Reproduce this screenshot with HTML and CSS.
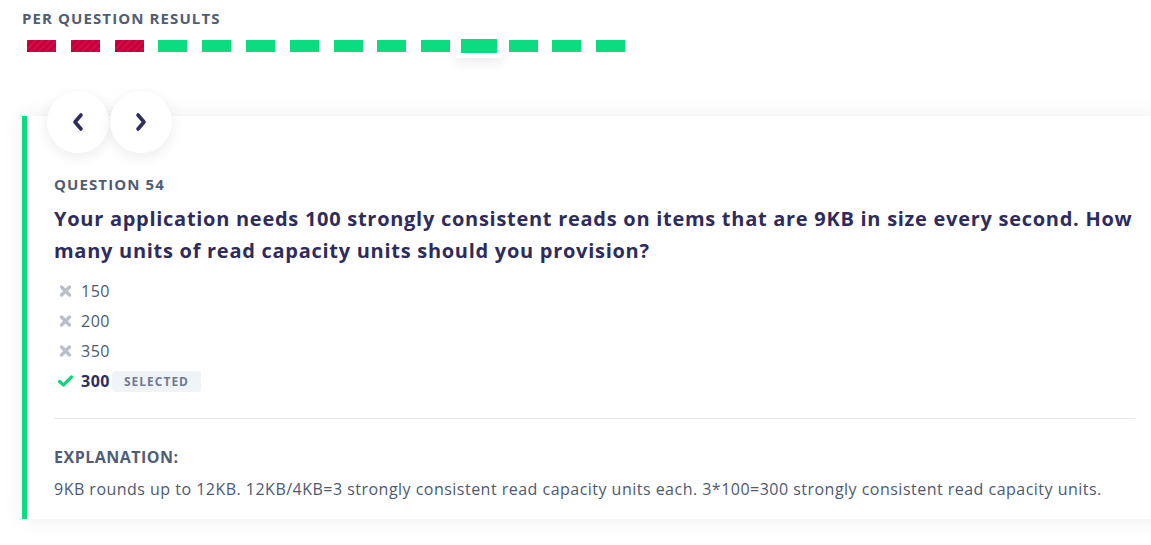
FILE: index.html
```html
<!DOCTYPE html>
<html lang="en">
<head>
<meta charset="utf-8">
<title>Per question results</title>
<link rel="stylesheet" href="styles.css">
</head>
<body>
<section class="results">
  <h2 class="results-title">PER QUESTION RESULTS</h2>
  <div class="bars">
    <span class="bar wrong"></span>
    <span class="bar wrong"></span>
    <span class="bar wrong"></span>
    <span class="bar right"></span>
    <span class="bar right"></span>
    <span class="bar right"></span>
    <span class="bar right"></span>
    <span class="bar right"></span>
    <span class="bar right"></span>
    <span class="bar right"></span>
    <span class="bar right current"></span>
    <span class="bar right"></span>
    <span class="bar right"></span>
    <span class="bar right"></span>
  </div>
</section>

<section class="card-area">
  <div class="nav">
    <button class="nav-btn" aria-label="Previous">
      <svg width="16" height="22" viewBox="0 0 16 22"><path d="M11 4 L5 11 L11 18" fill="none" stroke="#2e2c5c" stroke-width="3.6" stroke-linecap="round" stroke-linejoin="round"/></svg>
    </button>
    <button class="nav-btn" aria-label="Next">
      <svg width="16" height="22" viewBox="0 0 16 22"><path d="M5 4 L11 11 L5 18" fill="none" stroke="#2e2c5c" stroke-width="3.6" stroke-linecap="round" stroke-linejoin="round"/></svg>
    </button>
  </div>
  <article class="card">
    <div class="q-label">QUESTION 54</div>
    <h1 class="q-text">Your application needs 100 strongly consistent reads on items that are 9KB in size every second. How many units of read capacity units should you provision?</h1>
    <ul class="options">
      <li class="option">
        <svg class="icon" width="14" height="14" viewBox="0 0 14 14"><path d="M3 3 L11 11 M11 3 L3 11" stroke="#b9bfc9" stroke-width="3.4" stroke-linecap="round"/></svg>
        <span>150</span>
      </li>
      <li class="option">
        <svg class="icon" width="14" height="14" viewBox="0 0 14 14"><path d="M3 3 L11 11 M11 3 L3 11" stroke="#b9bfc9" stroke-width="3.4" stroke-linecap="round"/></svg>
        <span>200</span>
      </li>
      <li class="option">
        <svg class="icon" width="14" height="14" viewBox="0 0 14 14"><path d="M3 3 L11 11 M11 3 L3 11" stroke="#b9bfc9" stroke-width="3.4" stroke-linecap="round"/></svg>
        <span>350</span>
      </li>
      <li class="option chosen">
        <svg class="icon" width="17" height="14" viewBox="0 0 17 14"><path d="M2.5 7.5 L6.5 11 L14.5 3" fill="none" stroke="#17d17f" stroke-width="3.2" stroke-linecap="round" stroke-linejoin="round"/></svg>
        <span>300</span>
        <span class="badge">SELECTED</span>
      </li>
    </ul>
    <hr class="divider">
    <div class="exp-label">EXPLANATION:</div>
    <p class="exp-text">9KB rounds up to 12KB. 12KB/4KB=3 strongly consistent read capacity units each. 3*100=300 strongly consistent read capacity units.</p>
  </article>
</section>
</body>
</html>
```

FILE: styles.css
```css
html, body {
  margin: 0;
  padding: 0;
  overflow: hidden;
  background: #ffffff;
}

body {
  font-family: "Open Sans", "Noto Sans", sans-serif;
  color: #4d5a72;
  width: 1151px;
  height: 545px;
}

.results {
  padding: 8px 0 0 22px;
}

.results-title {
  margin: 0;
  font-size: 15px;
  line-height: 21px;
  font-weight: 700;
  letter-spacing: 1.1px;
  color: #505d76;
}

.bars {
  display: flex;
  align-items: center;
  gap: 14.8px;
  margin: 9px 0 0 5px;
  height: 16px;
}

.bar {
  display: block;
  width: 29px;
  height: 12px;
  flex: none;
}

.bar.right {
  background: #0bdc80;
}

.bar.wrong {
  background: repeating-linear-gradient(135deg, #d8064a 0 2.5px, #c00038 2.5px 5px);
}

.bar.current {
  width: 36px;
  height: 14px;
  margin: 0 -3.6px;
  box-shadow: 0 0 0 5px #ffffff, 0 5px 12px 5px rgba(30, 30, 70, 0.08);
}

.card-area {
  position: relative;
  margin-top: 62px;
}

.nav {
  position: absolute;
  left: 47px;
  top: -25px;
  display: flex;
  gap: 1px;
  z-index: 2;
}

.nav-btn {
  width: 62px;
  height: 62px;
  border-radius: 50%;
  border: none;
  background: #ffffff;
  box-shadow: 0 4px 14px rgba(30, 30, 70, 0.08);
  display: flex;
  align-items: center;
  justify-content: center;
  padding: 0;
  cursor: pointer;
}

.card {
  margin: 0 -14px 0 22px;
  background: #ffffff;
  border-left: 5px solid #0bdc80;
  box-shadow: 0 0 22px rgba(30, 30, 70, 0.07);
  padding: 58px 30px 18px 27px;
}

.q-label {
  font-size: 15px;
  line-height: 20px;
  font-weight: 700;
  letter-spacing: 1.1px;
  color: #505d76;
}

.q-text {
  margin: 9px 0 0 0;
  font-size: 20px;
  line-height: 32px;
  font-weight: 700;
  letter-spacing: 0.72px;
  color: #2e2c5c;
}

.options {
  list-style: none;
  margin: 9px 0 0 0;
  padding: 0;
}

.option {
  display: flex;
  align-items: center;
  height: 30px;
  font-size: 16px;
  letter-spacing: 0.5px;
  color: #4d5a72;
}

.option .icon {
  width: 17px;
  margin: 0 7px 0 3px;
  flex: none;
}

.option.chosen {
  font-weight: 700;
  color: #2e2c5c;
}

.badge {
  margin-left: 2px;
  padding: 0 12px;
  height: 21px;
  line-height: 21px;
  background: #f0f4f8;
  border-radius: 3px;
  font-size: 12px;
  font-weight: 700;
  letter-spacing: 1px;
  color: #6e7b91;
}

.divider {
  border: none;
  border-top: 1px solid #e9ecef;
  margin: 22px 0 0 0;
}

.exp-label {
  margin-top: 26px;
  font-size: 16px;
  line-height: 24px;
  font-weight: 700;
  letter-spacing: 0.5px;
  color: #505d76;
}

.exp-text {
  margin: 8px 0 0 0;
  font-size: 16px;
  line-height: 24px;
  letter-spacing: 0.48px;
  color: #4d5a72;
}
```
